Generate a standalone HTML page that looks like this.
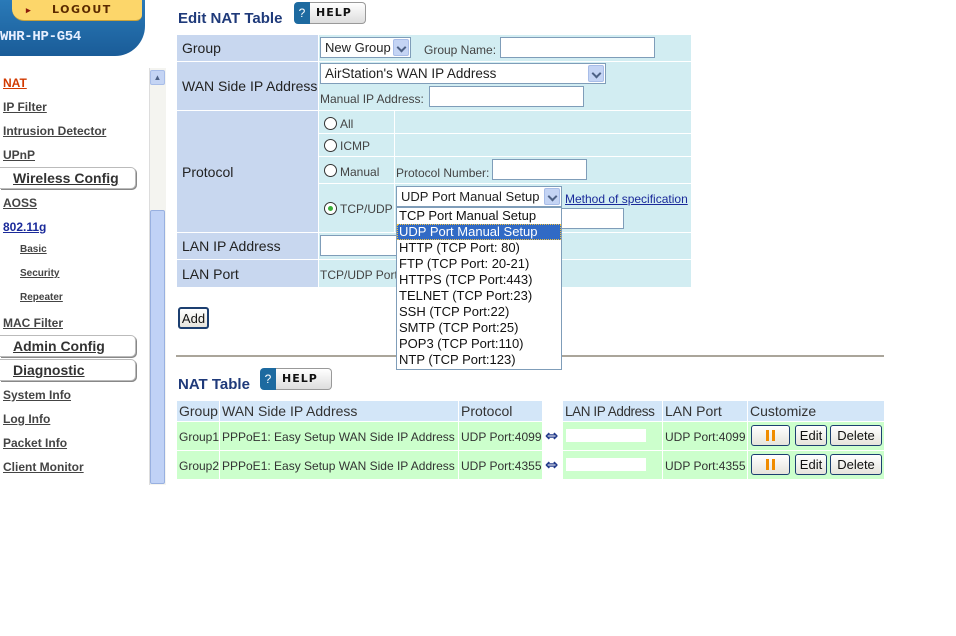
<!DOCTYPE html>
<html><head><meta charset="utf-8">
<style>
*{margin:0;padding:0;box-sizing:border-box}
body{width:956px;height:636px;background:#fff;font-family:"Liberation Sans",Arial,sans-serif;position:relative;overflow:hidden;color:#222}
.a{position:absolute}
.nav{position:absolute;left:3px;font-size:12px;font-weight:bold;color:#444;text-decoration:underline}
.sub{position:absolute;left:20px;font-size:10px;font-weight:bold;color:#444;text-decoration:underline}
.tab{position:absolute;left:0;width:136px;height:22px;border:1px solid #bbb;border-left:none;border-radius:0 5px 5px 0;background:#fff;font-size:14px;font-weight:bold;color:#333;padding:2px 0 0 13px;text-decoration:underline;box-shadow:1px 1px 0 #888}
.lab{position:absolute;left:177px;width:141px;background:#c8d7ef;font-size:14px;padding-left:5px;display:flex;align-items:center}
.val{position:absolute;background:#d2edf2}
.inp{position:absolute;background:#fff;border:1px solid #7f9db9;height:21px}
.sel{position:absolute;background:#fff;border:1px solid #7f9db9;height:21px;font-size:13.5px;padding:2px 0 0 4px;white-space:nowrap;overflow:hidden}
.arr{position:absolute;right:1px;top:1px;width:16px;height:17px;background:#c4d4f4;border:1px solid #a8bde8;border-radius:2px}
.arr:after{content:"";position:absolute;left:4px;top:4px;width:5px;height:5px;border-right:2px solid #4d6185;border-bottom:2px solid #4d6185;transform:rotate(45deg)}
.sm{position:absolute;font-size:12px;color:#444;white-space:nowrap}
.radio{position:absolute;width:13px;height:13px;border:1px solid #333;border-radius:50%;background:#fff}
.help{position:absolute;width:72px;height:22px}
.help .q{position:absolute;left:0;top:0;width:16px;height:22px;background:#1d6aa0;border-radius:4px 0 0 4px;color:#fff;font-size:12px;text-align:center;line-height:22px}
.help .t{position:absolute;left:16px;top:0;width:56px;height:22px;border:1px solid #999;border-left:none;border-radius:0 4px 4px 0;background:linear-gradient(#fff,#ddd);font-weight:bold;font-size:11px;letter-spacing:1px;padding:3px 0 0 6px;font-family:"DejaVu Sans",sans-serif;color:#111}
.dd{z-index:10}
.dd div{height:16px;font-size:13px;padding-left:2px;line-height:16px;color:#111;white-space:nowrap}
.th{position:absolute;top:401px;height:20px;background:#d3e6f8;font-size:14px;color:#333;padding:2px 0 0 2px;white-space:nowrap;overflow:hidden}
.td{position:absolute;height:28px;background:#ccffcc;font-size:12px;color:#333;padding:8px 0 0 2px;white-space:nowrap}
.btn{position:absolute;height:21px;border:1px solid #1c3f70;border-radius:3px;background:linear-gradient(#fff,#e6e4dc);font-size:13px;text-align:center;line-height:19px;color:#111}
.eq{position:absolute;left:545px;font-size:16px;font-weight:bold;color:#223a8a;font-family:"DejaVu Sans",sans-serif}
</style></head><body>

<div class="a" style="left:0;top:0;width:145px;height:56px;background:linear-gradient(#2a7ab8,#1a5c98);border-radius:0 0 30px 0"></div>
<div class="a" style="left:12px;top:0;width:130px;height:21px;background:#fcd66a;border-radius:0 0 6px 12px;border-bottom:1px solid #c9a23a"></div>
<div class="a" style="left:26px;top:5px;width:5px;height:10px;color:#8b1a0a;font-size:9px;font-weight:bold">▸</div>
<div class="a" style="left:52px;top:3px;font-size:11px;font-weight:bold;letter-spacing:1.5px;color:#5b2a00;font-family:'DejaVu Sans',sans-serif">LOGOUT</div>
<div class="a" style="left:0;top:29px;font-size:14px;font-weight:bold;color:#e8f0ff;font-family:'Liberation Mono',monospace;letter-spacing:-0.3px">WHR-HP-G54</div>

<div class="a" style="left:149px;top:68px;width:17px;height:417px;background:#f4f4f0;border-left:1px solid #ddd"></div>
<div class="a" style="left:150px;top:70px;width:15px;height:15px;background:#c4d4f4;border:1px solid #a8bde8;border-radius:2px;font-size:8px;text-align:center;color:#4d6185;line-height:14px">▲</div>
<div class="a" style="left:150px;top:210px;width:15px;height:274px;background:#c0d2f6;border:1px solid #98b0e0;border-radius:2px"></div>

<a class="nav" style="top:76px;color:#d23a00">NAT</a>
<a class="nav" style="top:100px">IP Filter</a>
<a class="nav" style="top:124px">Intrusion Detector</a>
<a class="nav" style="top:148px">UPnP</a>
<div class="tab" style="top:167px">Wireless Config</div>
<a class="nav" style="top:196px">AOSS</a>
<a class="nav" style="top:220px;color:#1a2a9a">802.11g</a>
<a class="sub" style="top:244px">Basic</a>
<a class="sub" style="top:268px">Security</a>
<a class="sub" style="top:292px">Repeater</a>
<a class="nav" style="top:316px">MAC Filter</a>
<div class="tab" style="top:335px">Admin Config</div>
<div class="tab" style="top:359px">Diagnostic</div>
<a class="nav" style="top:388px">System Info</a>
<a class="nav" style="top:412px">Log Info</a>
<a class="nav" style="top:436px">Packet Info</a>
<a class="nav" style="top:460px">Client Monitor</a>

<div class="a" style="left:178px;top:10px;font-size:15px;font-weight:bold;color:#1f3a7a">Edit NAT Table</div>
<div class="help" style="left:294px;top:2px"><div class="q">?</div><div class="t">HELP</div></div>

<div class="lab" style="top:35px;height:26px">Group</div>
<div class="val" style="left:319px;top:35px;width:372px;height:26px"></div>
<div class="lab" style="top:62px;height:48px">WAN Side IP Address</div>
<div class="val" style="left:319px;top:62px;width:372px;height:48px"></div>
<div class="lab" style="top:111px;height:121px">Protocol</div>
<div class="val" style="left:319px;top:111px;width:75px;height:22px"></div>
<div class="val" style="left:395px;top:111px;width:296px;height:22px"></div>
<div class="val" style="left:319px;top:134px;width:75px;height:22px"></div>
<div class="val" style="left:395px;top:134px;width:296px;height:22px"></div>
<div class="val" style="left:319px;top:157px;width:75px;height:26px"></div>
<div class="val" style="left:395px;top:157px;width:296px;height:26px"></div>
<div class="val" style="left:319px;top:184px;width:75px;height:48px"></div>
<div class="val" style="left:395px;top:184px;width:296px;height:48px"></div>
<div class="lab" style="top:233px;height:26px">LAN IP Address</div>
<div class="val" style="left:319px;top:233px;width:372px;height:26px"></div>
<div class="lab" style="top:260px;height:27px">LAN Port</div>
<div class="val" style="left:319px;top:260px;width:372px;height:27px"></div>

<div class="sel" style="left:320px;top:37px;width:91px;font-size:13px">New Group<div class="arr"></div></div>
<div class="sm" style="left:424px;top:43px">Group Name:</div>
<div class="inp" style="left:500px;top:37px;width:155px"></div>
<div class="sel" style="left:320px;top:63px;width:286px">AirStation's WAN IP Address<div class="arr"></div></div>
<div class="sm" style="left:320px;top:92px">Manual IP Address:</div>
<div class="inp" style="left:429px;top:86px;width:155px"></div>

<div class="radio" style="left:324px;top:117px"></div><div class="sm" style="left:340px;top:117px">All</div>
<div class="radio" style="left:324px;top:139px"></div><div class="sm" style="left:340px;top:139px">ICMP</div>
<div class="radio" style="left:324px;top:164px"></div><div class="sm" style="left:340px;top:165px">Manual</div>
<div class="sm" style="left:396px;top:166px">Protocol Number:</div>
<div class="inp" style="left:492px;top:159px;width:95px"></div>
<div class="radio" style="left:324px;top:202px"><div style="position:absolute;left:3px;top:3px;width:5px;height:5px;border-radius:50%;background:#3ab03a"></div></div>
<div class="sm" style="left:340px;top:202px">TCP/UDP</div>
<div class="sel" style="left:396px;top:186px;width:166px;font-size:13px">UDP Port Manual Setup<div class="arr"></div></div>
<a class="a" style="left:565px;top:192px;font-size:12px;color:#1a2a9a;text-decoration:underline">Method of specification</a>
<div class="inp" style="left:560px;top:208px;width:64px"></div>

<div class="inp" style="left:320px;top:235px;width:80px"></div>
<div class="sm" style="left:320px;top:268px">TCP/UDP Port</div>

<div class="a dd" style="left:396px;top:207px;width:166px;height:163px;background:#fff;border:1px solid #7f9db9">
<div>TCP Port Manual Setup</div>
<div style="background:#316ac5;color:#fff;outline:1px dotted #f0c040;outline-offset:-1px">UDP Port Manual Setup</div>
<div>HTTP (TCP Port: 80)</div>
<div>FTP (TCP Port: 20-21)</div>
<div>HTTPS (TCP Port:443)</div>
<div>TELNET (TCP Port:23)</div>
<div>SSH (TCP Port:22)</div>
<div>SMTP (TCP Port:25)</div>
<div>POP3 (TCP Port:110)</div>
<div>NTP (TCP Port:123)</div>
</div>

<div class="btn" style="left:178px;top:307px;width:31px;height:22px;border-width:2px">Add</div>
<div class="a" style="left:176px;top:355px;width:708px;height:2px;background:#aaa59a"></div>

<div class="a" style="left:178px;top:376px;font-size:15px;font-weight:bold;color:#1f3a7a">NAT Table</div>
<div class="help" style="left:260px;top:368px"><div class="q">?</div><div class="t">HELP</div></div>

<div class="th" style="left:177px;width:42px">Group</div>
<div class="th" style="left:220px;width:238px">WAN Side IP Address</div>
<div class="th" style="left:459px;width:83px">Protocol</div>
<div class="th" style="left:563px;width:99px;letter-spacing:-0.4px;font-size:13.5px;padding-top:3px">LAN IP Address</div>
<div class="th" style="left:663px;width:84px">LAN Port</div>
<div class="th" style="left:748px;width:136px">Customize</div>

<div class="td" style="left:177px;top:422px;width:42px">Group1</div>
<div class="td" style="left:220px;top:422px;width:238px">PPPoE1: Easy Setup WAN Side IP Address</div>
<div class="td" style="left:459px;top:422px;width:83px">UDP Port:4099</div>
<div class="eq" style="top:426px">⇔</div>
<div class="td" style="left:563px;top:422px;width:99px"><div style="position:absolute;left:3px;top:7px;width:80px;height:13px;background:#fff"></div></div>
<div class="td" style="left:663px;top:422px;width:84px">UDP Port:4099</div>
<div class="td" style="left:748px;top:422px;width:136px"></div>

<div class="td" style="left:177px;top:451px;width:42px">Group2</div>
<div class="td" style="left:220px;top:451px;width:238px">PPPoE1: Easy Setup WAN Side IP Address</div>
<div class="td" style="left:459px;top:451px;width:83px">UDP Port:4355</div>
<div class="eq" style="top:455px">⇔</div>
<div class="td" style="left:563px;top:451px;width:99px"><div style="position:absolute;left:3px;top:7px;width:80px;height:13px;background:#fff"></div></div>
<div class="td" style="left:663px;top:451px;width:84px">UDP Port:4355</div>
<div class="td" style="left:748px;top:451px;width:136px"></div>

<div class="btn" style="left:751px;top:425px;width:39px"><span style="display:inline-block;width:3px;height:11px;background:#f08c00;margin-top:4px"></span> <span style="display:inline-block;width:3px;height:11px;background:#f08c00"></span></div>
<div class="btn" style="left:795px;top:425px;width:32px">Edit</div>
<div class="btn" style="left:830px;top:425px;width:52px">Delete</div>
<div class="btn" style="left:751px;top:454px;width:39px"><span style="display:inline-block;width:3px;height:11px;background:#f08c00;margin-top:4px"></span> <span style="display:inline-block;width:3px;height:11px;background:#f08c00"></span></div>
<div class="btn" style="left:795px;top:454px;width:32px">Edit</div>
<div class="btn" style="left:830px;top:454px;width:52px">Delete</div>

</body></html>
